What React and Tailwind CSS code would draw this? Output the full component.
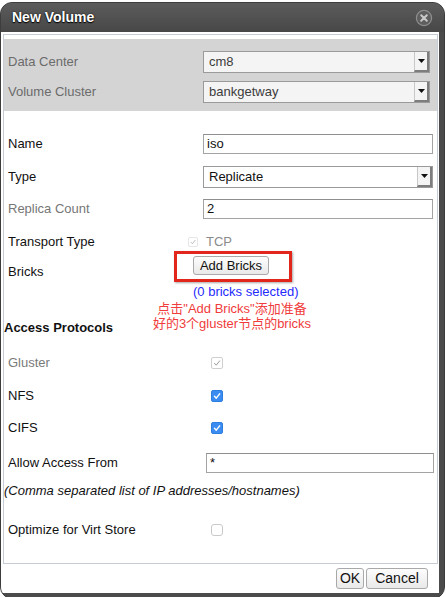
import React from "react";

const F = "font-['Liberation_Sans',Arial,sans-serif]";

const Check = ({ color, w = 1.5 }) => (
  <svg viewBox="0 0 12 12" className="w-full h-full block">
    <path d="M3 6.4 L5.1 8.6 L9.2 3.4" fill="none" stroke={color} strokeWidth={w} strokeLinecap="round" strokeLinejoin="round" />
  </svg>
);

const Arrow = () => (
  <span className="absolute right-0 top-0 h-full w-[15px] flex items-center justify-center bg-[#f4f4f4] border-l border-[#c8c8c8] border-r-2 border-b-2 border-r-[#7d7d7d] border-b-[#7d7d7d]">
    <svg width="7" height="4" viewBox="0 0 7 4" className="block">
      <path d="M0 0 L7 0 L3.5 4 Z" fill="#111" />
    </svg>
  </span>
);

const Select = ({ value, disabled, w }) => (
  <div
    className={`relative h-[22px] ${w} border border-[#9a9a9a] flex items-center pl-[5px] text-[13px] ${
      disabled ? "bg-[#f4f4f4] text-[#3c3c3c]" : "bg-white text-[#111]"
    }`}
  >
    {value}
    <Arrow />
  </div>
);

const Input = ({ value, w }) => (
  <div className={`h-[20px] ${w} border border-[#a3a3a3] border-t-[#8e8e8e] bg-white flex items-center pl-[3px] text-[13px] text-[#111]`}>
    {value}
  </div>
);

const Btn = ({ children, cls = "" }) => (
  <div
    className={`flex items-center justify-center border border-[#a9a9a9] rounded-[3px] bg-gradient-to-b from-[#fdfdfd] to-[#e9e9e9] text-[#111] ${cls}`}
  >
    {children}
  </div>
);

const BlueCb = () => (
  <div className="w-[12px] h-[12px] rounded-[2px] bg-[#3b8cf0] border border-[#2f7fe0]">
    <Check color="#fff" w={1.7} />
  </div>
);

export default function App() {
  return (
    <div className={`w-[446px] h-[597px] bg-white pt-[2px] overflow-hidden ${F}`}>
      <div className="w-[445px] h-[597px] rounded-[12px] bg-[#4b4b4b] border border-[#3d3d3d] flex flex-col overflow-hidden">
        {/* Title bar */}
        <div className="h-[29px] shrink-0 flex items-center justify-between pl-[11px] pr-[11px] bg-gradient-to-b from-[#5c5c5c] to-[#474747]">
          <span className="text-white text-[14px] font-bold [text-shadow:0_1px_1px_#000,0_0_2px_#111]">New Volume</span>
          <svg width="18" height="18" viewBox="0 0 18 18" className="block">
            <circle cx="9" cy="9" r="7.6" fill="#5e5e5e" stroke="#8f8f8f" strokeWidth="1.2" />
            <path d="M6.2 6.2 L11.8 11.8 M11.8 6.2 L6.2 11.8" stroke="#c8c8c8" strokeWidth="2" strokeLinecap="round" />
          </svg>
        </div>

        {/* Body */}
        <div className="bg-white mr-[5px] mb-[5px] h-[561px] flex flex-col pl-[2px]">
          {/* panel */}
          <div className="relative mt-[2px] w-[435px] h-[530px] border border-[#c5ccd6] pt-[4px]">
            {/* gray section */}
            <div className="h-[72px] bg-[#d4d4d4] pt-[12px]">
              <div className="flex items-center h-[22px]">
                <div className="w-[199px] pl-[4px] text-[13px] text-[#6b6b6b]">Data Center</div>
                <Select value="cm8" disabled w="w-[227px]" />
              </div>
              <div className="flex items-center h-[22px] mt-[8px]">
                <div className="w-[199px] pl-[4px] text-[13px] text-[#6b6b6b]">Volume Cluster</div>
                <Select value="bankgetway" disabled w="w-[227px]" />
              </div>
            </div>

            <div className="flex items-center h-[20px] mt-[23px]">
              <div className="w-[199px] pl-[4px] text-[13px] text-[#111]">Name</div>
              <Input value="iso" w="w-[230px]" />
            </div>
            <div className="flex items-center h-[22px] mt-[12px]">
              <div className="w-[199px] pl-[4px] text-[13px] text-[#111]">Type</div>
              <Select value="Replicate" w="w-[230px]" />
            </div>
            <div className="flex items-center h-[20px] mt-[11px]">
              <div className="w-[199px] pl-[4px] text-[13px] text-[#767676]">Replica Count</div>
              <Input value="2" w="w-[230px]" />
            </div>
            <div className="flex items-center h-[16px] mt-[15px]">
              <div className="w-[184px] pl-[4px] text-[13px] text-[#111]">Transport Type</div>
              <div className="w-[10px] h-[10px] border border-[#e6e6e6] rounded-[2px]">
                <Check color="#b5b5b5" w={1.3} />
              </div>
              <span className="ml-[8px] text-[13px] text-[#8a8a8a]">TCP</span>
            </div>
            <div className="flex items-start h-[19px] mt-[6px]">
              <div className="w-[189px] pl-[4px] text-[13px] leading-[15px] mt-[8px] text-[#111]">Bricks</div>
              <Btn cls="w-[76px] h-[19px] text-[13px]">Add Bricks</Btn>
            </div>
            <div className="h-[15px] mt-[9px] pl-[189px] text-[13px] leading-[15px] text-[#1f2bff]">(0 bricks selected)</div>

            <div className="h-[14px] mt-[22px] text-[13px] leading-[14px] font-bold text-[#111]">Access Protocols</div>

            <div className="flex items-center h-[16px] mt-[20px]">
              <div className="w-[207px] pl-[4px] text-[13px] text-[#7a7a7a]">Gluster</div>
              <div className="w-[12px] h-[12px] rounded-[2px] border border-[#cfcfcf] bg-white">
                <Check color="#9a9a9a" w={1.2} />
              </div>
            </div>
            <div className="flex items-center h-[16px] mt-[17px]">
              <div className="w-[207px] pl-[4px] text-[13px] text-[#111]">NFS</div>
              <BlueCb />
            </div>
            <div className="flex items-center h-[16px] mt-[16px]">
              <div className="w-[207px] pl-[4px] text-[13px] text-[#111]">CIFS</div>
              <BlueCb />
            </div>
            <div className="flex items-center h-[20px] mt-[17px]">
              <div className="w-[202px] pl-[4px] text-[13px] text-[#111]">Allow Access From</div>
              <Input value="*" w="w-[228px]" />
            </div>
            <div className="h-[15px] mt-[10px] text-[13px] leading-[15px] italic text-[#111]">
              (Comma separated list of IP addresses/hostnames)
            </div>
            <div className="flex items-center h-[16px] mt-[24px]">
              <div className="w-[207px] pl-[4px] text-[13px] text-[#111]">Optimize for Virt Store</div>
              <div className="w-[12px] h-[12px] rounded-[3px] border border-[#c9c9c9] bg-white" />
            </div>

            {/* annotation overlay */}
            <div className="absolute left-[170px] top-[216px] w-[118px] h-[31px] border-[3px] border-[#e3261c] shadow-[1px_1px_2px_rgba(0,0,0,0.35)]" />
            <div className="absolute left-[140px] top-[266px] w-[176px] text-center text-[13px] leading-[15px] text-[#f03c3c] font-['Liberation_Sans','Noto_Sans_CJK_SC',sans-serif]">
              <div>点击"Add Bricks"添加准备</div>
              <div>好的3个gluster节点的bricks</div>
            </div>
          </div>

          {/* footer */}
          <div className="flex justify-end gap-[2px] mt-[4px] pr-[11px]">
            <Btn cls="w-[28px] h-[21px] text-[14px]">OK</Btn>
            <Btn cls="w-[62px] h-[21px] text-[14px]">Cancel</Btn>
          </div>
        </div>
      </div>
    </div>
  );
}
